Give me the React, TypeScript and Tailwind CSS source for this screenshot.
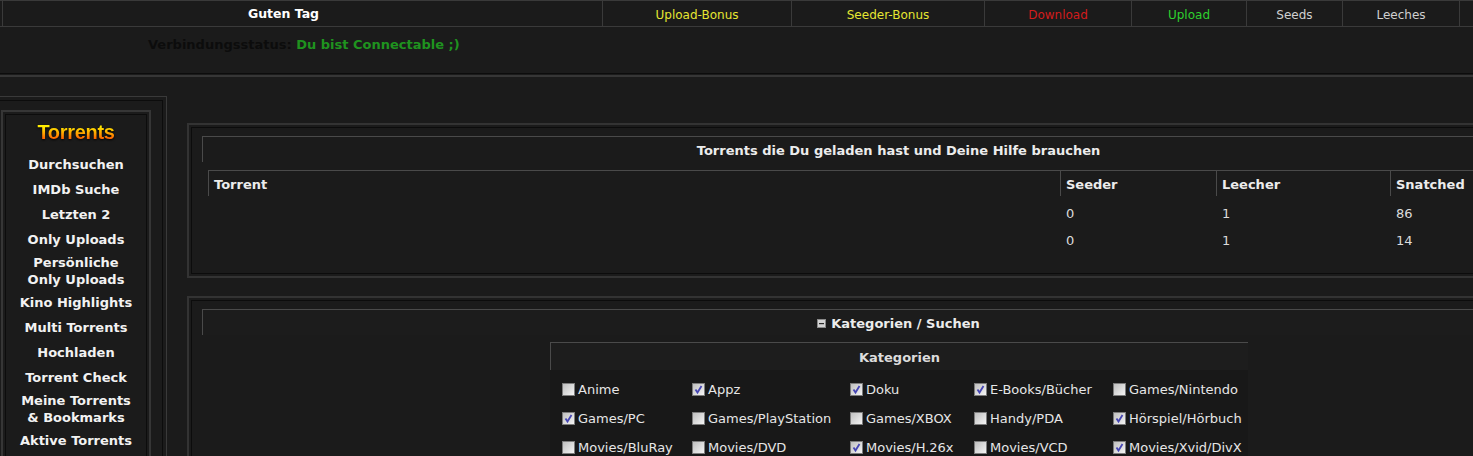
import React from "react";

const font = { fontFamily: "'DejaVu Sans', Verdana, sans-serif" };

const topCells: { label: string; w: string; color: string }[] = [
  { label: "Upload-Bonus", w: "w-[189px]", color: "text-[#e6e632]" },
  { label: "Seeder-Bonus", w: "w-[193px]", color: "text-[#e6e632]" },
  { label: "Download", w: "w-[147px]", color: "text-[#d21c1c]" },
  { label: "Upload", w: "w-[115px]", color: "text-[#2ed12e]" },
  { label: "Seeds", w: "w-[96px]", color: "text-[#d0d0d0]" },
  { label: "Leeches", w: "w-[117px]", color: "text-[#d0d0d0]" },
];

const sideItems: string[][] = [
  ["Durchsuchen"],
  ["IMDb Suche"],
  ["Letzten 2"],
  ["Only Uploads"],
  ["Persönliche", "Only Uploads"],
  ["Kino Highlights"],
  ["Multi Torrents"],
  ["Hochladen"],
  ["Torrent Check"],
  ["Meine Torrents", "& Bookmarks"],
  ["Aktive Torrents"],
];

const cats: [string, boolean][] = [
  ["Anime", false],
  ["Appz", true],
  ["Doku", true],
  ["E-Books/Bücher", true],
  ["Games/Nintendo", false],
  ["Games/PC", true],
  ["Games/PlayStation", false],
  ["Games/XBOX", false],
  ["Handy/PDA", false],
  ["Hörspiel/Hörbuch", true],
  ["Movies/BluRay", false],
  ["Movies/DVD", false],
  ["Movies/H.26x", true],
  ["Movies/VCD", false],
  ["Movies/Xvid/DivX", true],
];

function Box({ checked }: { checked: boolean }) {
  return (
    <span className="relative inline-block w-[13px] h-[13px] shrink-0 border border-[#7c7c7c] bg-gradient-to-br from-[#bfbfbf] to-[#f4f4f4]">
      {checked && (
        <svg viewBox="0 0 11 11" className="absolute left-0 top-0 w-[11px] h-[11px]">
          <path d="M2.5 5.5 L4.5 8.5 L8.5 2" fill="none" stroke="#4646b4" strokeWidth="1.8" />
        </svg>
      )}
    </span>
  );
}

function Panel({ children, pb }: { children: React.ReactNode; pb: string }) {
  return (
    <div className="w-[1422px] shrink-0 border-2 border-[#333333] p-[2px]">
      <div className={`border border-[#0c0c0c] pt-[8px] px-[10px] ${pb}`}>{children}</div>
    </div>
  );
}

export default function App() {
  return (
    <div className="w-[1473px] h-[456px] overflow-hidden bg-[#1b1b1b] text-[#e6e6e6]" style={font}>
      {/* top bar */}
      <div className="flex border-t border-[#3a3a3a]">
        <div className="w-[2px] shrink-0 h-[26px] border-b border-[#3a3a3a]" />
        <div className="w-[600px] shrink-0 h-[26px] flex items-center justify-center pt-[2px] pr-[38px] border-l border-b border-[#3a3a3a] text-[12.5px] font-bold text-white">
          Guten Tag
        </div>
        {topCells.map((c) => (
          <div
            key={c.label}
            className={`${c.w} shrink-0 h-[26px] flex items-center justify-center pt-[2px] border-l border-b border-[#3a3a3a] text-[12px] ${c.color}`}
          >
            {c.label}
          </div>
        ))}
        <div className="flex-1 h-[26px] border-l border-b border-[#3a3a3a]" />
      </div>

      {/* status */}
      <div className="h-[46px] pt-[9px] pl-[148px] text-[13px] leading-[17px] font-bold">
        <span className="text-[#0c0c0c]">Verbindungsstatus: </span>
        <span className="text-[#1f931f]">Du bist Connectable ;)</span>
      </div>
      <div className="h-px bg-[#0c0c0c]" />
      <div className="h-px" />
      <div className="h-[2px] bg-[#363636]" />

      <div className="flex items-start">
        {/* sidebar */}
        <div className="mt-[19px] w-[167px] shrink-0 border-t border-r border-[#3a3a3a] pt-[3px] pr-[3px]">
          <div className="border-t border-r border-[#0c0c0c] pt-[9px] pb-[40px]">
            <div className="ml-[1px] w-[150px] border-2 border-[#363636] p-[2px]">
              <div className="border border-[#0c0c0c] pt-[5px] pb-[20px] flex flex-col items-center">
                <div
                  className="h-[24px] leading-[24px] text-[20px] font-bold tracking-[-0.3px] bg-gradient-to-b from-[#fff000] from-[25%] to-[#ff5a00] to-[80%] bg-clip-text text-transparent drop-shadow-[0_1px_1px_rgba(0,0,0,0.9)]"
                  style={{ fontFamily: "'Liberation Sans', Arial, sans-serif" }}
                >
                  Torrents
                </div>
                <div className="mt-[8px] flex flex-col items-center w-full">
                  {sideItems.map((it) => (
                    <div
                      key={it.join()}
                      className={`${it.length > 1 ? "py-[2px]" : "py-[4px]"} text-[13px] leading-[17px] font-bold text-[#f2f2f2] text-center`}
                    >
                      {it.map((l) => (
                        <div key={l}>{l}</div>
                      ))}
                    </div>
                  ))}
                </div>
              </div>
            </div>
          </div>
        </div>

        {/* main */}
        <div className="ml-[20px] mt-[46px] flex flex-col shrink-0">
          <Panel pb="pb-[19px]">
            <div className="h-[26px] pt-[2px] border-t border-l border-[#4a4a4a] flex items-center justify-center text-[13px] font-bold text-[#ececec]">
              Torrents die Du geladen hast und Deine Hilfe brauchen
            </div>
            <div className="mt-[8px] mx-[6px]">
              <div className="grid grid-cols-[852px_156px_174px_1fr] text-[13px] font-bold text-[#ececec]">
                {["Torrent", "Seeder", "Leecher", "Snatched"].map((h) => (
                  <div key={h} className="h-[26px] pt-[2px] border-t border-l border-[#4a4a4a] pl-[5px] flex items-center">
                    {h}
                  </div>
                ))}
              </div>
              <div className="mt-[4px] text-[13px] text-[#dcdcdc]">
                {[
                  ["0", "1", "86"],
                  ["0", "1", "14"],
                ].map((r, i) => (
                  <div key={i} className="grid grid-cols-[852px_156px_174px_1fr] h-[27px] pt-[1px] items-center">
                    <div />
                    {r.map((v, j) => (
                      <div key={j} className="pl-[6px]">
                        {v}
                      </div>
                    ))}
                  </div>
                ))}
              </div>
            </div>
          </Panel>

          <div className="mt-[18px]">
            <Panel pb="pb-[40px]">
              <div className="h-[26px] pt-[2px] border-t border-l border-[#4a4a4a] flex items-center justify-center text-[13px] font-bold text-[#ececec] bg-[#1c1c1c]">
                <svg viewBox="0 0 9 9" className="w-[9px] h-[9px] mr-[5px]">
                  <rect x="0" y="0" width="9" height="9" fill="#d4d4d4" />
                  <rect x="0.5" y="0.5" width="8" height="8" fill="none" stroke="#8a8a8a" strokeWidth="1" />
                  <rect x="2" y="4" width="5" height="1.2" fill="#2a2a2a" />
                </svg>
                Kategorien / Suchen
              </div>
              <div className="mt-[7px] ml-[348px] w-[698px]">
                <div className="h-[28px] pt-[2px] border-t border-l border-[#4a4a4a] flex items-center justify-center text-[13px] font-bold text-[#dcdcdc] bg-[#1d1d1d]">
                  Kategorien
                </div>
                <div className="pt-[5px] grid grid-cols-[142px_158px_124px_139px_135px] bg-[#181818] text-[13px] text-[#e6e6e6]">
                  {cats.map(([name, on], i) => (
                    <div key={name} className={`h-[29px] flex items-center ${i % 5 === 0 ? "pl-[12px]" : ""}`}>
                      <Box checked={on} />
                      <span className="ml-[3px] leading-[16px]">{name}</span>
                    </div>
                  ))}
                </div>
              </div>
            </Panel>
          </div>
        </div>
      </div>
    </div>
  );
}
